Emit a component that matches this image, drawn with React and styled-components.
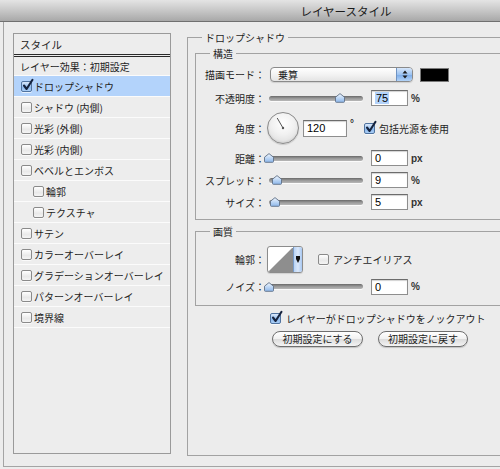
import React from 'react';
import styled, { createGlobalStyle } from 'styled-components';

const Global = createGlobalStyle`
  html, body { margin: 0; padding: 0; background: #ececec; }
  body {
    width: 500px; height: 469px; overflow: hidden;
    font-family: "Noto Sans CJK JP", "Noto Sans", sans-serif;
    font-size: 10px; color: #1e1e1e;
  }
`;

const Window = styled.div`
  width: 692px;
  height: 469px;
  background: #ececec;
  display: flex;
  flex-direction: column;
`;

const TitleBar = styled.div`
  height: 21px;
  flex-shrink: 0;
  border-bottom: 1px solid #707070;
  background: linear-gradient(#e4e4e4, #c4c4c4 55%, #a8a8a8);
  display: flex;
  align-items: center;
  justify-content: center;
  font-size: 11.5px;
  color: #1a1a1a;
`;

const Frame = styled.div`
  box-sizing: border-box;
  margin-left: 3px;
  height: 445px;
  border-left: 1px solid #a4a4a4;
  border-bottom: 1px solid #a4a4a4;
  display: flex;
  align-items: flex-start;
  padding: 11px 0 0 9px;
`;

/* ---------- style list ---------- */
const StyleList = styled.div`
  box-sizing: border-box;
  width: 158px;
  height: 421px;
  flex-shrink: 0;
  border: 1px solid #9a9a9a;
  background: #ededed;
  display: flex;
  flex-direction: column;
`;

const ListHeader = styled.div`
  height: 20px;
  border-bottom: 3px double #2a2a2a;
  display: flex;
  align-items: center;
  padding-left: 6px;
  font-size: 10.5px;
`;

const ListRow = styled.div`
  height: ${p => (p.$plain ? 18 : 20)}px;
  border-bottom: 1px solid #fbfbfb;
  display: flex;
  align-items: center;
  gap: 2px;
  padding-left: ${p => (p.$plain ? 6 : p.$indent ? 19 : 7)}px;
  background: ${p => (p.$selected ? '#b3d3fb' : 'transparent')};
  white-space: nowrap;
`;

/* ---------- checkbox ---------- */
const CheckBoxBox = styled.span`
  position: relative;
  box-sizing: border-box;
  width: 11px;
  height: 11px;
  flex-shrink: 0;
  border: 1px solid ${p => (p.$checked ? '#50739f' : '#8a8a8a')};
  border-radius: 2px;
  background: ${p =>
    p.$checked
      ? 'linear-gradient(#dbe9fb, #8dbaef 60%, #a9cdf5)'
      : 'linear-gradient(#ffffff, #e9e9e9 60%, #f4f4f4)'};
  box-shadow: 0 1px 0 rgba(255,255,255,0.7);
  & > svg {
    position: absolute;
    left: 0px;
    top: -3px;
    overflow: visible;
  }
`;

function Checkbox({ checked }) {
  return (
    <CheckBoxBox $checked={checked}>
      {checked && (
        <svg width="12" height="12" viewBox="0 0 12 12">
          <path d="M2 6.5 L4.6 10 L10.5 0.8" fill="none" stroke="#16233d" strokeWidth="2.1"
            strokeLinecap="round" strokeLinejoin="round" />
        </svg>
      )}
    </CheckBoxBox>
  );
}

/* ---------- group boxes ---------- */
const Group = styled.fieldset`
  box-sizing: border-box;
  margin: ${p => p.$margin || '0'};
  padding: ${p => p.$padding || '0'};
  min-width: 0;
  width: ${p => p.$width || 'auto'};
  height: ${p => (p.$height ? `${p.$height}px` : 'auto')};
  border: 1px solid #a2a2a2;
  border-radius: 0;
  display: flex;
  flex-direction: column;
  flex-shrink: 0;
`;

const Legend = styled.legend`
  margin-left: ${p => p.$indent}px;
  padding: 0 3px;
  line-height: 13px;
  font-size: 10px;
  color: #1e1e1e;
`;

/* ---------- rows ---------- */
const Row = styled.div`
  display: flex;
  align-items: center;
  height: ${p => p.$h}px;
  margin-bottom: ${p => p.$mb || 0}px;
`;

const Label = styled.div`
  width: 69px;
  flex-shrink: 0;
  text-align: right;
  white-space: nowrap;
`;

const Dropdown = styled.div`
  box-sizing: border-box;
  margin-left: 5px;
  width: 143px;
  height: 15px;
  border: 1px solid #8a8a8a;
  border-radius: 4px;
  background: linear-gradient(#ffffff, #f3f3f3 50%, #e4e4e4);
  display: flex;
  align-items: center;
  overflow: hidden;
  box-shadow: 0 1px 1px rgba(0,0,0,0.12);
`;

const DropdownText = styled.span`
  flex: 1;
  padding-left: 7px;
`;

const DropdownArrows = styled.span`
  width: 15px;
  height: 100%;
  border-left: 1px solid #6f93c2;
  background: linear-gradient(#d6e6fa, #9cc3f1 50%, #7aaae8 51%, #b3d4f8);
  display: flex;
  align-items: center;
  justify-content: center;
`;

const Swatch = styled.div`
  box-sizing: border-box;
  margin-left: 7px;
  width: 29px;
  height: 14px;
  background: #000;
  border: 1px solid #7a7a7a;
`;

const SliderWrap = styled.div`
  position: relative;
  margin-left: 4px;
  width: 94px;
  height: 12px;
  display: flex;
  align-items: center;
  flex-shrink: 0;
`;

const Track = styled.div`
  width: 100%;
  height: 5px;
  border-radius: 3px;
  background: linear-gradient(#6a6a6a, #9a9a9a 50%, #b8b8b8);
  box-shadow: 0 1px 0 rgba(255,255,255,0.8);
`;

const Thumb = styled.svg`
  position: absolute;
  top: 1px;
  transform: translateX(-50%);
  overflow: visible;
`;

function Slider({ pct }) {
  return (
    <SliderWrap>
      <Track />
      <Thumb width="11" height="10" viewBox="0 0 11 10" style={{ left: `${pct}%` }}>
        <defs>
          <linearGradient id="thumbg" x1="0" y1="0" x2="0" y2="1">
            <stop offset="0" stopColor="#f2f7fe" />
            <stop offset="0.55" stopColor="#b9d4f4" />
            <stop offset="1" stopColor="#8cb6ea" />
          </linearGradient>
        </defs>
        <path d="M1 4.2 L5.5 0.6 L10 4.2 L10 8.4 Q10 9.3 9.1 9.3 L1.9 9.3 Q1 9.3 1 8.4 Z"
          fill="url(#thumbg)" stroke="#5f6f86" strokeWidth="0.9" />
      </Thumb>
    </SliderWrap>
  );
}

const NumField = styled.div`
  box-sizing: border-box;
  margin-left: ${p => p.$ml ?? 8}px;
  width: ${p => p.$w || 37}px;
  height: ${p => p.$h || 16}px;
  flex-shrink: 0;
  background: #fff;
  border: 1px solid #8e8e8e;
  border-top-color: #6c6c6c;
  box-shadow: inset 0 1px 1px rgba(0,0,0,0.18);
  display: flex;
  align-items: center;
  padding-left: 3px;
  font-family: "Liberation Sans", Arial, sans-serif;
  font-size: 11px;
  color: #000;
`;

const Selected = styled.span`
  background: #b3d3fb;
  padding: 0 1px;
`;

const Unit = styled.span`
  margin-left: 3px;
  font-family: "Liberation Sans", Arial, sans-serif;
  font-weight: bold;
  font-size: 10px;
  color: #333;
  align-self: ${p => (p.$top ? 'flex-start' : 'auto')};
  margin-top: ${p => (p.$top ? 6 : 0)}px;
`;

const Dial = styled.div`
  position: relative;
  box-sizing: border-box;
  margin-left: 2px;
  width: 32px;
  height: 32px;
  flex-shrink: 0;
  border-radius: 50%;
  border: 1px solid #8a8a8a;
  background: radial-gradient(circle at 50% 35%, #ffffff, #f1f1f1 45%, #d6d6d6);
  box-shadow: 0 1px 1px rgba(0,0,0,0.15), inset 0 -1px 2px rgba(0,0,0,0.08);
  & > svg { position: absolute; left: 0; top: 0; }
`;

const CheckLabel = styled.label`
  display: flex;
  align-items: center;
  gap: ${p => p.$gap ?? 4}px;
  margin-left: ${p => p.$ml || 0}px;
  white-space: nowrap;
`;

const ContourBox = styled.div`
  box-sizing: border-box;
  margin-left: 2px;
  width: 36px;
  height: 27px;
  flex-shrink: 0;
  border: 1px solid #8c8c8c;
  border-radius: 3px;
  background: #fff;
  display: flex;
  overflow: hidden;
  box-shadow: 0 1px 1px rgba(0,0,0,0.12);
`;

const ContourPreview = styled.svg`
  flex: 1;
  display: block;
`;

const ContourButton = styled.span`
  width: 8px;
  border-left: 1px solid #7a9cc8;
  background: linear-gradient(90deg, #b8d3f5, #dbe8fa 50%, #a8c8f2);
  display: flex;
  align-items: center;
  justify-content: center;
`;

const Footer = styled.div`
  display: flex;
  flex-direction: column;
  gap: 5px;
  margin-top: 5px;
  padding-left: 75px;
`;

const ButtonRow = styled.div`
  display: flex;
  gap: 15px;
  padding-left: 2px;
`;

const PillButton = styled.button`
  box-sizing: border-box;
  width: ${p => p.$w}px;
  height: 16px;
  border: 1px solid #6e6e6e;
  border-radius: 8px;
  background: linear-gradient(#ffffff, #f1f1f1 50%, #dcdcdc 51%, #f4f4f4);
  box-shadow: 0 1px 1px rgba(0,0,0,0.18);
  font-family: "Noto Sans CJK JP", sans-serif;
  font-size: 10px;
  color: #1e1e1e;
  padding: 0;
  line-height: 14px;
`;

const items = [
  { label: 'ドロップシャドウ', checked: true, selected: true },
  { label: 'シャドウ (内側)' },
  { label: '光彩 (外側)' },
  { label: '光彩 (内側)' },
  { label: 'ベベルとエンボス' },
  { label: '輪郭', indent: true },
  { label: 'テクスチャ', indent: true },
  { label: 'サテン' },
  { label: 'カラーオーバーレイ' },
  { label: 'グラデーションオーバーレイ' },
  { label: 'パターンオーバーレイ' },
  { label: '境界線' },
];

export default function App() {
  return (
    <>
      <Global />
      <Window>
        <TitleBar>レイヤースタイル</TitleBar>
        <Frame>
          <StyleList>
            <ListHeader>スタイル</ListHeader>
            <ListRow $plain>レイヤー効果：初期設定</ListRow>
            {items.map(it => (
              <ListRow key={it.label} $indent={it.indent} $selected={it.selected}>
                <Checkbox checked={it.checked} />
                <span>{it.label}</span>
              </ListRow>
            ))}
          </StyleList>

          <Group $margin="-2px 0 0 16px" $padding="3px 0 0 7px" $width="340px" $height={425}>
            <Legend $indent={7}>ドロップシャドウ</Legend>

            <Group $padding="7px 0 9px 0">
              <Legend $indent={14}>構造</Legend>
              <Row $h={15} $mb={8}>
                <Label>描画モード：</Label>
                <Dropdown>
                  <DropdownText>乗算</DropdownText>
                  <DropdownArrows>
                    <svg width="6" height="9" viewBox="0 0 6 9">
                      <path d="M3 0.5 L5.5 3.5 L0.5 3.5 Z M3 8.5 L5.5 5.5 L0.5 5.5 Z" fill="#1c1c1c" />
                    </svg>
                  </DropdownArrows>
                </Dropdown>
                <Swatch />
              </Row>
              <Row $h={16} $mb={6}>
                <Label>不透明度：</Label>
                <Slider pct={75} />
                <NumField><Selected>75</Selected></NumField>
                <Unit>%</Unit>
              </Row>
              <Row $h={32} $mb={6}>
                <Label>角度：</Label>
                <Dial>
                  <svg width="30" height="30" viewBox="0 0 30 30">
                    <line x1="15" y1="15" x2="9.2" y2="5" stroke="#555" strokeWidth="1" />
                    <circle cx="15" cy="15" r="1.2" fill="#555" />
                  </svg>
                </Dial>
                <NumField $ml={4} $w={44} $h={17}>120</NumField>
                <Unit $top>°</Unit>
                <CheckLabel $ml={10}>
                  <Checkbox checked />
                  <span>包括光源を使用</span>
                </CheckLabel>
              </Row>
              <Row $h={16} $mb={6}>
                <Label>距離：</Label>
                <Slider pct={0} />
                <NumField>0</NumField>
                <Unit>px</Unit>
              </Row>
              <Row $h={16} $mb={6}>
                <Label>スプレッド：</Label>
                <Slider pct={9} />
                <NumField>9</NumField>
                <Unit>%</Unit>
              </Row>
              <Row $h={16}>
                <Label>サイズ：</Label>
                <Slider pct={6.5} />
                <NumField>5</NumField>
                <Unit>px</Unit>
              </Row>
            </Group>

            <Group $margin="5px 0 0 0" $padding="8px 0 10px 0">
              <Legend $indent={14}>画質</Legend>
              <Row $h={27} $mb={5}>
                <Label>輪郭：</Label>
                <ContourBox>
                  <ContourPreview viewBox="0 0 27 25" preserveAspectRatio="none">
                    <path d="M0 25 L26 1 L27 1 L27 25 Z" fill="#8e8e8e" />
                  </ContourPreview>
                  <ContourButton>
                    <svg width="4" height="7" viewBox="0 0 4 7">
                      <path d="M0 0 L4 0 L4 3 L2 7 L0 3 Z" fill="#111" />
                    </svg>
                  </ContourButton>
                </ContourBox>
                <CheckLabel $ml={15}>
                  <Checkbox />
                  <span>アンチエイリアス</span>
                </CheckLabel>
              </Row>
              <Row $h={17}>
                <Label>ノイズ：</Label>
                <Slider pct={0} />
                <NumField>0</NumField>
                <Unit>%</Unit>
              </Row>
            </Group>

            <Footer>
              <CheckLabel $gap={5}>
                <Checkbox checked />
                <span>レイヤーがドロップシャドウをノックアウト</span>
              </CheckLabel>
              <ButtonRow>
                <PillButton $w={91}>初期設定にする</PillButton>
                <PillButton $w={90}>初期設定に戻す</PillButton>
              </ButtonRow>
            </Footer>
          </Group>
        </Frame>
      </Window>
    </>
  );
}
